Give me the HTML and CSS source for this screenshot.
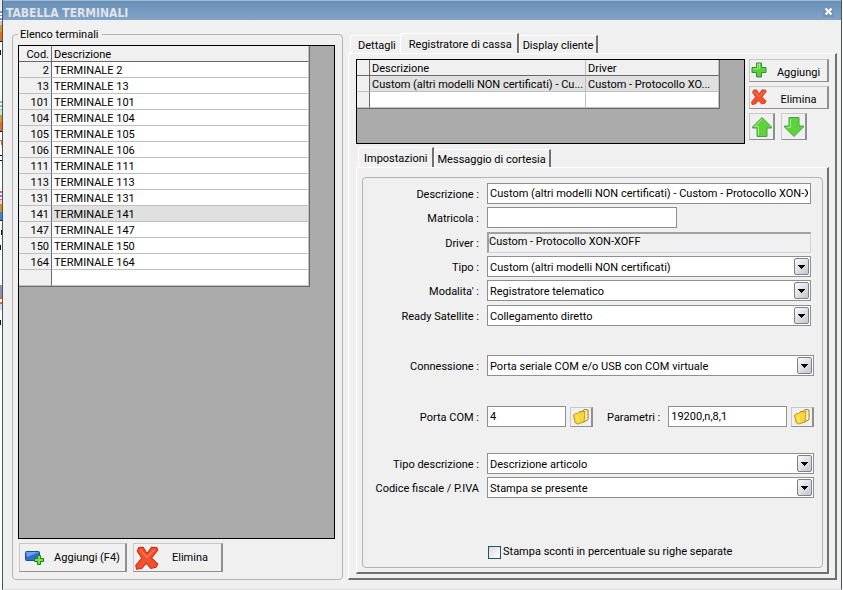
FILE: index.html
```html
<!DOCTYPE html>
<html lang="it">
<head>
<meta charset="utf-8">
<title>Tabella terminali</title>
<link rel="stylesheet" href="styles.css">
</head>
<body>
<svg class="backdrop" viewBox="0 0 2 590" aria-hidden="true">
  <path d="M0 0h2v10H0z" fill="#e8ecf2"/>
  <path d="M0 11h2v2H0zM0 15h2v1H0zM0 18h2v2H0z" fill="#8a92cc"/>
  <path d="M0 21h2v4H0z" fill="#c4c6e6"/>
  <path d="M0 25h2v7H0z" fill="#d59a22"/><path d="M0 32h2v9H0z" fill="#ea6a20"/>
  <path d="M0 41h2v1H0zM0 50h1v5H0z" fill="#111"/>
  <path d="M0 101h2v2H0zM0 105h2v2H0zM0 109h2v1H0z" fill="#72cc9a"/><path d="M0 110h2v5H0z" fill="#bdeace"/>
  <path d="M0 115h2v7H0z" fill="#d59a22"/><path d="M0 122h2v9H0z" fill="#ea6a20"/>
  <path d="M0 131h2v1H0zM0 155h2v1H0zM0 160h2v1H0z" fill="#111"/>
  <path d="M0 140h2v1H0zM1 141h1v4H1z" fill="#d0741c"/>
  <path d="M0 191h2v2H0zM0 195h2v2H0zM0 199h2v1H0z" fill="#d862a4"/><path d="M0 200h2v4H0z" fill="#f4c6e0"/>
  <path d="M0 204h2v8H0z" fill="#cf9420"/><path d="M0 212h2v8H0z" fill="#3e86dc"/>
  <path d="M0 220h2v1H0zM1 230h1v5H1zM0 245h1v5H0zM0 320h1v5H0z" fill="#111"/>
  <path d="M0 285h2v12H0z" fill="#8f90b4"/><path d="M0 297h2v2H0zM0 302h2v2H0z" fill="#f2641e"/><path d="M0 304h2v6H0z" fill="#d6d6f4"/>
</svg>
<main class="window">
  <header class="titlebar">
    <h1>TABELLA TERMINALI</h1>
    <button class="close" type="button" aria-label="Chiudi"><svg viewBox="0 0 11 11"><path d="M2.500 2.500l6 6M8.500 2.500l-6 6" stroke="#fff" stroke-width="2.200"/></svg></button>
  </header>
  <div class="content">
    <section class="list-side">
      <fieldset class="group">
        <legend>Elenco terminali</legend>
        <div class="grid-box list-box">
          <table class="terminals">
            <thead><tr><th class="code">Cod.</th><th>Descrizione</th></tr></thead>
            <tbody>
              <tr><th>2</th><td>TERMINALE 2</td></tr>
              <tr><th>13</th><td>TERMINALE 13</td></tr>
              <tr><th>101</th><td>TERMINALE 101</td></tr>
              <tr><th>104</th><td>TERMINALE 104</td></tr>
              <tr><th>105</th><td>TERMINALE 105</td></tr>
              <tr><th>106</th><td>TERMINALE 106</td></tr>
              <tr><th>111</th><td>TERMINALE 111</td></tr>
              <tr><th>113</th><td>TERMINALE 113</td></tr>
              <tr><th>131</th><td>TERMINALE 131</td></tr>
              <tr class="selected"><th>141</th><td>TERMINALE 141</td></tr>
              <tr><th>147</th><td>TERMINALE 147</td></tr>
              <tr><th>150</th><td>TERMINALE 150</td></tr>
              <tr><th>164</th><td>TERMINALE 164</td></tr>
              <tr><th></th><td></td></tr>
            </tbody>
          </table>
        </div>
        <div class="list-actions">
          <button class="btn add-big" type="button"><svg width="20" height="16" viewBox="0 0 20 16"><rect x=".5" y="1.500" width="14" height="9" rx="1" fill="#2f6fc8" stroke="#1d4b96"/><path d="M1 2h13L2 7z" fill="#6fa4e6"/><path d="M12.500 5.500h3v3h3v3h-3v3h-3v-3h-3v-3h3z" fill="#7be04a" stroke="#1f7d1c"/></svg><span>Aggiungi (F4)</span></button>
          <button class="btn del-big" type="button"><svg width="24" height="24" viewBox="0 0 16 16"><path d="M2.500 1L5.500.8 8 5l3-4.200 3.500.2.700 1.700L11 8l4.200 4-1.200 2.200-3.500.8L7.500 11.500l-3 3.500-3.500.5L.5 13 4.500 8 1.500 3.500z" fill="#f4502c" stroke="#c2301a" stroke-width=".7"/><path d="M3.500 2.500L8 7.500l5-5" fill="none" stroke="#ff8e6a" stroke-width=".7"/></svg><span>Elimina</span></button>
        </div>
      </fieldset>
    </section>

    <section class="detail-side">
      <nav class="tabs">
        <button class="tab" type="button">Dettagli</button>
        <button class="tab active roomy" type="button">Registratore di cassa</button>
        <button class="tab edge" type="button">Display cliente</button>
      </nav>
      <div class="panel outer">
        <div class="devices">
          <div class="grid-box device-box">
            <table class="drivers">
              <thead><tr><th class="gutter"></th><th class="desc">Descrizione</th><th>Driver</th></tr></thead>
              <tbody>
                <tr class="selected"><th></th><td>Custom (altri modelli NON certificati) - Cu...</td><td>Custom - Protocollo XO...</td></tr>
                <tr><th></th><td></td><td></td></tr>
              </tbody>
            </table>
          </div>
          <div class="device-actions">
            <button class="btn small" type="button"><svg width="16" height="16" viewBox="0 0 16 16"><path d="M5.500 1h5v4.500H15v5h-4.500V15h-5v-4.500H1v-5h4.500z" fill="#5ccf3a" stroke="#2d9130"/><path d="M6.500 6.500V2h2v5M2 7h5" stroke="#a5f080" fill="none"/></svg><span>Aggiungi</span></button>
            <button class="btn small" type="button"><svg width="16" height="16" viewBox="0 0 16 16"><path d="M2.500 1L5.500.8 8 5l3-4.200 3.500.2.700 1.700L11 8l4.200 4-1.200 2.200-3.500.8L7.500 11.500l-3 3.500-3.500.5L.5 13 4.500 8 1.500 3.500z" fill="#f4502c" stroke="#c2301a" stroke-width=".7"/><path d="M3.500 2.500L8 7.500l5-5" fill="none" stroke="#ff8e6a" stroke-width=".7"/></svg><span>Elimina</span></button>
            <div class="arrows">
              <button class="btn arrow" type="button" aria-label="Sposta su"><svg width="22" height="22" viewBox="0 0 22 22"><path d="M11 1.500L20.500 11v1H16v8.500H6V12H1.500v-1z" fill="#5fd43a" stroke="#4aa04a"/><path d="M11 3L4 10.500h3.500V19" fill="none" stroke="#a4ee80"/></svg></button>
              <button class="btn arrow" type="button" aria-label="Sposta giù"><svg width="22" height="22" viewBox="0 0 22 22"><path d="M11 20.500L20.500 11v-1H16V1.500H6V10H1.500v1z" fill="#5fd43a" stroke="#4aa04a"/><path d="M7.500 3v8.500H4" fill="none" stroke="#a4ee80"/></svg></button>
            </div>
          </div>
        </div>
        <nav class="tabs">
          <button class="tab active" type="button">Impostazioni</button>
          <button class="tab edge" type="button">Messaggio di cortesia</button>
        </nav>
        <div class="panel inner">
          <form class="group form">
            <div class="device">
              <div class="rows">
                <div class="row"><label for="descr">Descrizione :</label><input id="descr" type="text" value="Custom (altri modelli NON certificati) - Custom - Protocollo XON-XOFF"></div>
                <div class="row"><label for="matr">Matricola :</label><input id="matr" class="short" type="text"></div>
              </div>
              <div class="rows">
                <div class="row"><label for="driver">Driver :</label><input id="driver" class="sunken" type="text" readonly value="Custom - Protocollo XON-XOFF"></div>
                <div class="row"><label for="tipo">Tipo :</label><div class="select"><select id="tipo"><option>Custom (altri modelli NON certificati)</option></select></div></div>
                <div class="row"><label for="mod">Modalita' :</label><div class="select"><select id="mod"><option>Registratore telematico</option></select></div></div>
              </div>
              <div class="row"><label for="ready">Ready Satellite :</label><div class="select"><select id="ready"><option>Collegamento diretto</option></select></div></div>
            </div>
            <div class="link">
              <div class="row"><label for="conn">Connessione :</label><div class="select"><select id="conn"><option>Porta seriale COM e/o USB con COM virtuale</option></select></div></div>
              <div class="row"><label for="com">Porta COM :</label>
                <div class="pair">
                  <input id="com" class="port" type="text" value="4">
                  <button class="btn pick" type="button" aria-label="Scegli porta"><svg width="18" height="16" viewBox="0 0 18 16"><path d="M7 3l4-1 1-1.500 4 .5v9.500L12 13z" fill="#fff3c0" stroke="#a07a20"/><path d="M1.500 6l2-1.500h2L7 3l6-.5-1 10.500-6.500 2L3 13.500z" fill="#f8d838" stroke="#c09a20"/><path d="M5 6.500L6.500 13" stroke="#fff2a0"/></svg></button>
                  <label class="params" for="par">Parametri :</label>
                  <input id="par" type="text" value="19200,n,8,1">
                  <button class="btn pick" type="button" aria-label="Scegli parametri"><svg width="18" height="16" viewBox="0 0 18 16"><path d="M7 3l4-1 1-1.500 4 .5v9.500L12 13z" fill="#fff3c0" stroke="#a07a20"/><path d="M1.500 6l2-1.500h2L7 3l6-.5-1 10.500-6.500 2L3 13.500z" fill="#f8d838" stroke="#c09a20"/><path d="M5 6.500L6.500 13" stroke="#fff2a0"/></svg></button>
                </div>
              </div>
            </div>
            <div class="rows print">
              <div class="row"><label for="tdesc">Tipo descrizione :</label><div class="select"><select id="tdesc"><option>Descrizione articolo</option></select></div></div>
              <div class="row"><label for="cf">Codice fiscale / P.IVA</label><div class="select"><select id="cf"><option>Stampa se presente</option></select></div></div>
            </div>
            <label class="check"><input type="checkbox"><span>Stampa sconti in percentuale su righe separate</span></label>
          </form>
        </div>
      </div>
    </section>
  </div>
</main>
</body>
</html>
```
FILE: styles.css
```css
*, *::after { box-sizing: border-box; }

body {
  margin: 0;
  min-height: 100vh;
  display: flex;
  background: #fff;
  color: #000;
  font: 11px/14px Roboto, Tahoma, sans-serif;
}

button, input, select { font: inherit; color: inherit; margin: 0; }

.backdrop { flex: none; width: 2px; height: 590px; }

.window {
  flex: 1;
  min-width: 0;
  display: flex;
  flex-direction: column;
  margin-right: 1px;
  background: #f0f0f0;
  border-left: 1px solid #46545f;
  border-right: 1px solid #46545f;
  border-bottom: 1px solid #dcdcdc;
}

.titlebar {
  display: flex;
  align-items: center;
  justify-content: space-between;
  height: 20px;
  padding: 1px 7px 0 3px;
  border-top: 1px solid #a3bad2;
  background: linear-gradient(#6890b8, #83a3c6);
}
.titlebar h1 { margin: 0; padding-top: 4px; font: bold 12px/14px "DejaVu Sans Condensed", Tahoma, sans-serif; color: #dfe3e8; }
.close { width: 11px; height: 11px; padding: 0; border: 0; background: #7393b5; }
.close svg { display: block; width: 11px; height: 11px; }

.content { flex: 1; display: flex; gap: 5px; padding: 7px 4px 9px 9px; }
.list-side { flex: 0 1 331px; display: flex; }
.detail-side { flex: 1; min-width: 0; display: flex; flex-direction: column; padding-top: 6px; }

.group { border: 1px solid #b4b4b4; border-radius: 4px; }
fieldset.group {
  flex: 1;
  min-width: 0;
  margin: 0;
  padding: 3px 7px 7px 5px;
  display: flex;
  flex-direction: column;
}
legend { margin-left: 0; padding: 1px 4px 0 2px; }

.grid-box { border: 1px solid #000; background: #ababab; }
.list-box { flex: 1; }
.list-actions { display: flex; gap: 6px; padding: 4px 0 0 1px; }

table {
  border-collapse: separate;
  border-spacing: 0;
  table-layout: fixed;
  border-right: 1px solid #696969;
  border-bottom: 1px solid #696969;
}
th, td {
  height: 16px;
  padding: 2px 2px 0;
  overflow: hidden;
  font-weight: normal;
  line-height: 13px;
  text-align: left;
  white-space: nowrap;
  border-bottom: 1px solid #c0c0c0;
}
td { background: #fff; border-right: 1px solid #c0c0c0; }
thead th { background: #f0f0f0; border-bottom-color: #696969; border-right: 1px solid #c0c0c0; }
tbody th, thead th:first-child { background: #f0f0f0; border-right: 1px solid #696969; text-align: right; }
tr.selected td { background: #e0e0e0; }
.terminals { width: 291px; }
.code { width: 33px; }
.drivers { width: 363px; }
.gutter { width: 13px; }
.desc { width: 216px; }

.btn {
  display: flex;
  align-items: center;
  padding: 0;
  background: #f0f0f0;
  border: 1px solid #c8c8c8;
  border-right: 2px solid #909090;
  border-bottom-color: #909090;
}
.btn span { flex: 1; text-align: center; }
.btn svg { flex: none; }
.add-big, .del-big { height: 29px; }
.add-big { width: 108px; padding-left: 5px; }
.add-big span { padding-left: 4px; }
.del-big { width: 90px; padding-left: 1px; }

.tabs { display: flex; align-items: flex-end; padding-left: 2px; }
.tab {
  height: 18px;
  padding: 3px 4px 0 7px;
  background: #f0f0f0;
  border: 1px solid #fff;
  border-width: 1px 0 0 1px;
  border-radius: 3px 0 0 0;
  line-height: 14px;
}
.tab.active { height: 20px; padding: 3px 4px 1px 5px; border-right: 2px solid #707070; }
.tab.active.roomy { padding: 3px 5px 1px 8px; }
.tab.edge { padding: 3px 3px 0; border-right: 2px solid #707070; }

.panel {
  flex: 1;
  display: flex;
  flex-direction: column;
  border: 1px solid #fff;
  border-right: 2px solid #707070;
  border-bottom: 2px solid #707070;
}
.outer { padding: 5px 6px 4px 7px; }
.inner { padding: 9px 4px 4px 5px; }

.devices { display: flex; gap: 4px; margin-bottom: 3px; }
.device-box { flex: 1; min-width: 0; height: 85px; }
.device-actions { width: 80px; display: flex; flex-direction: column; gap: 4px; }
.small { height: 23px; padding-left: 1px; }
.small svg { margin-bottom: 2px; }
.small span { padding: 4px 0 0 3px; }
.arrows { display: flex; gap: 6px; }
.arrow { width: 26px; height: 27px; justify-content: center; }

.form { flex: 1; padding: 5px 8px 8px 0; display: flex; flex-direction: column; }
.rows { display: flex; flex-direction: column; gap: 3px; }
.device { display: flex; flex-direction: column; gap: 4px; padding-right: 3px; margin-bottom: 29px; }
.link { display: flex; flex-direction: column; gap: 30px; margin-bottom: 26px; }
.print { margin-bottom: 47px; }
.row { display: grid; grid-template-columns: 116px minmax(0, 1fr); column-gap: 8px; align-items: center; }
.row > label { padding-top: 2px; text-align: right; }

input[type="text"], select {
  width: 100%;
  height: 21px;
  padding: 0 2px;
  background: #fff;
  border: 1px solid #8f8f8f;
  border-radius: 0;
  outline: 0;
}
input.short { width: 190px; }
input.sunken {
  padding: 0 0 3px;
  background: #f0f0f0;
  border: 1px solid #d0d0d8;
  border-top: 2px solid #a0a0a0;
  border-left: 2px solid #a0a0a0;
}
select { appearance: none; grid-area: 1 / 1; padding-top: 2px; }
.select { display: grid; align-items: center; }
.select::after {
  content: "";
  grid-area: 1 / 1;
  justify-self: end;
  width: 15px;
  height: 17px;
  margin-right: 2px;
  border: 1px solid #7c8288;
  border-radius: 2px;
  background:
    linear-gradient(#000, #000) 3px 6px / 7px 1px no-repeat,
    linear-gradient(#000, #000) 4px 7px / 5px 1px no-repeat,
    linear-gradient(#000, #000) 5px 8px / 3px 1px no-repeat,
    linear-gradient(#000, #000) 6px 9px / 1px 1px no-repeat,
    linear-gradient(135deg, #fafafa, #c4c6ce);
  pointer-events: none;
}

.pair { display: flex; align-items: center; }
.pair .port { flex: none; width: 79px; }
.pair input { flex: 1; min-width: 0; }
.pick { flex: none; width: 23px; height: 20px; margin-left: 4px; justify-content: center; }
.params { margin: 0 8px 0 14px; padding-top: 2px; white-space: nowrap; }

.check { display: flex; align-items: center; gap: 2px; margin-left: 125px; }
.check input {
  appearance: none;
  width: 13px;
  height: 13px;
  border: 1px solid #1c5180;
  background: linear-gradient(135deg, #dcdcd7, #fff);
}
```
